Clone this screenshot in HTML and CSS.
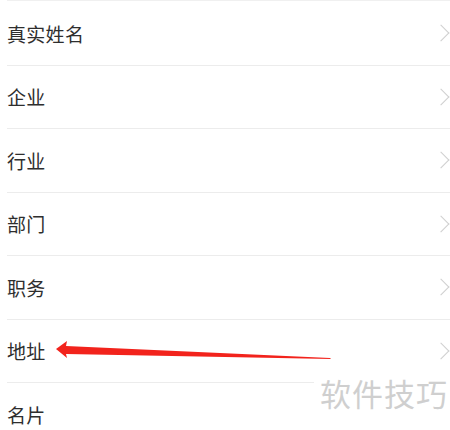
FILE: index.html
```html
<!DOCTYPE html>
<html lang="zh-CN">
<head>
    <meta charset="UTF-8">
    <title>个人信息</title>
    <link rel="stylesheet" href="styles.css">
</head>
<body>
    <div class="list">
        <div class="row"><span class="label">真实姓名</span><span class="chevron"></span></div>
        <div class="row"><span class="label">企业</span><span class="chevron"></span></div>
        <div class="row"><span class="label">行业</span><span class="chevron"></span></div>
        <div class="row"><span class="label">部门</span><span class="chevron"></span></div>
        <div class="row"><span class="label">职务</span><span class="chevron"></span></div>
        <div class="row"><span class="label">地址</span><span class="chevron"></span></div>
        <div class="row"><span class="label">名片</span><span class="chevron"></span></div>
    </div>

    <!-- 标注箭头 -->
    <svg class="arrow" width="450" height="430" viewBox="0 0 450 430">
        <polygon points="56,349 67,341 66,346 330,358 331,359 66,354 67,358" fill="#f2231c"/>
    </svg>

    <div class="watermark">软件技巧</div>
</body>
</html>
```

FILE: styles.css
```css
body {
    margin: 0;
    background: #fff;
    font-family: "Noto Sans CJK SC", "Noto Sans", sans-serif;
    position: relative;
    width: 450px;
    height: 430px;
    overflow: hidden;
}
.list {
    padding-top: 1px;
    margin-left: 7px;
    border-top: 1px solid #f0f0f0;
}
.row {
    height: 62.5px;
    border-bottom: 1px solid #ececec;
    display: flex;
    align-items: center;
    justify-content: space-between;
}
.label {
    font-size: 19px;
    color: #2e2e2e;
    letter-spacing: 0.3px;
}
.chevron {
    width: 11px;
    height: 11px;
    border-top: 1.5px solid #cfcfcf;
    border-right: 1.5px solid #cfcfcf;
    transform: rotate(45deg);
    margin-right: 3px;
}
.arrow {
    position: absolute;
    left: 0;
    top: 0;
}
.watermark {
    position: absolute;
    left: 314px;
    top: 374px;
    padding: 0 4px 20px 6px;
    background: #fff;
    color: #cfcfcf;
    font-size: 31px;
    line-height: 38px;
    letter-spacing: 1px;
    white-space: nowrap;
}
```
